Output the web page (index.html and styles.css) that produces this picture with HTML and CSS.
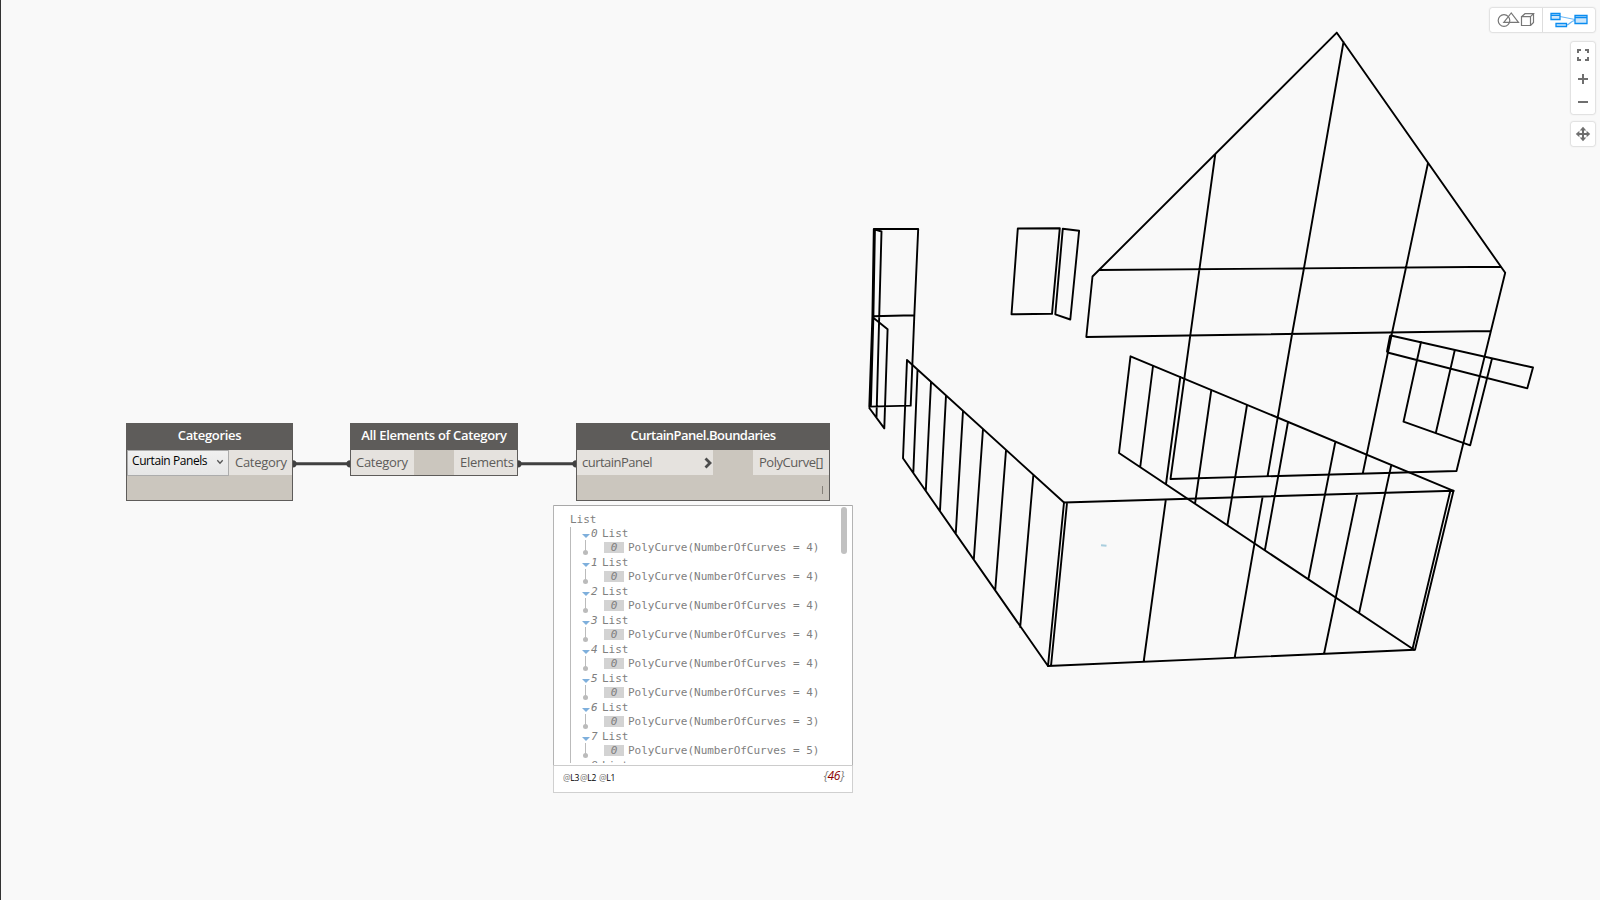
FILE: index.html
```html
<!DOCTYPE html>
<html lang="en">
<head>
<meta charset="utf-8">
<title>Graph workspace</title>
<link rel="stylesheet" href="styles.css">
</head>
<body>
<main class="workspace">
<svg class="scene" width="1600" height="900" viewBox="0 0 1600 900">
<g class="geometry">
<path d="M873.8 229L918.2 229L914.3 316L910.7 405.6L869.3 406.6L872.4 316.3Z M873 316.2L914 315.2 M875.2 229.6L881.5 231.5L876.5 417 M874.9 230L873.4 316L870.9 405 M872.7 317.3L887.6 329.3L884.3 428.4L869.3 408"/>
<path d="M1017.8 228.5L1059.8 228.2L1052 313.8L1011.5 314.3Z M1062.8 228.7L1079.1 230.8L1070.3 319.5L1055.3 314.3Z"/>
<path d="M1336.8 32.7L1092.5 276.5L1086.3 337L1490.5 331 M1336.8 32.7L1505.2 272.8L1456.5 471L1170.5 479 M1099 270L1501 266.7 M1215.3 154L1170.5 479 M1343.5 42L1304 268L1292 334.5L1267.7 475.5 M1428 163L1406 267.5L1392 333L1362.8 473.3"/>
<path d="M1390.8 335.5L1533 367.5L1527.3 388.3L1387.5 352.5Z M1390 336L1387 351.5 M1421 342L1403.5 421.7L1470.2 445.3L1492 358.5 M1454.8 350L1435.8 433"/>
<path d="M1064 502.5L907 360L903 458.3L1048 666Z M917.5 370L913.3 473 M931 382L925.8 491 M946 395.5L940 510.5 M963 411L955.8 533 M983 429L973.8 559.5 M1006 450.5L995.2 590.5 M1033.3 475.5L1020.2 627"/>
<path d="M1064 502.5L1453.5 490.8L1415 649.8L1048 666 M1067 503L1051 666 M1450.3 491L1412.5 649 M1165.7 500.5L1143.7 661.5 M1262.5 497.5L1234.7 657.5 M1357.3 494L1324.2 653"/>
<path d="M1453.5 490.8L1130.5 356.3L1119 453L1414 649.8 M1153 366L1140.3 466.5 M1180.3 377L1166 484 M1211.3 390L1195.2 502.5 M1247 405L1227.5 524.5 M1288 422L1265 549.5 M1335.3 442L1308.5 578.5 M1391.3 465L1359.2 612.5"/>
</g>
<path class="marker" d="M1101 545.2L1106.5 545.8"/>
<g class="wires"><path d="M293 463.8H350 M518 463.8H576"/><circle cx="293" cy="463.8" r="3.6"/><circle cx="350" cy="463.8" r="3.6"/><circle cx="518" cy="463.8" r="3.6"/><circle cx="576" cy="463.8" r="3.6"/></g>
</svg>

<section class="node node-categories">
<h2 class="node-title"><span class="t-categories">Categories</span></h2>
<div class="ports"><div class="select"><span class="t-panels">Curtain Panels</span><svg width="8" height="6" viewBox="0 0 8 6"><path d="M1.3 1.2L4 4.2L6.7 1.2"/></svg></div><div class="port port-cat"><span class="t-category">Category</span></div></div>
</section>
<section class="node node-elements">
<h2 class="node-title"><span class="t-all">All Elements of Category</span></h2>
<div class="ports"><div class="port port-in"><span class="t-category">Category</span></div><div class="port port-out"><span class="t-elements">Elements</span></div></div>
</section>
<section class="node node-boundaries">
<h2 class="node-title"><span class="t-bound">CurtainPanel.Boundaries</span></h2>
<div class="ports"><div class="port port-curtain"><span class="t-curtain">curtainPanel</span><svg width="9" height="12" viewBox="0 0 9 12"><path d="M1.5 1.5L6 6L1.5 10.5"/></svg></div><div class="port port-poly"><span class="t-poly">PolyCurve[]</span></div></div>
<div class="lacing"></div>
</section>

<section class="preview">
<div class="list-view">
<div class="root">List</div>
<div class="tree">
<div class="entry"><div class="head"><i>0</i>List</div><div class="item"><b>0</b>PolyCurve(NumberOfCurves = 4)</div></div>
<div class="entry"><div class="head"><i>1</i>List</div><div class="item"><b>0</b>PolyCurve(NumberOfCurves = 4)</div></div>
<div class="entry"><div class="head"><i>2</i>List</div><div class="item"><b>0</b>PolyCurve(NumberOfCurves = 4)</div></div>
<div class="entry"><div class="head"><i>3</i>List</div><div class="item"><b>0</b>PolyCurve(NumberOfCurves = 4)</div></div>
<div class="entry"><div class="head"><i>4</i>List</div><div class="item"><b>0</b>PolyCurve(NumberOfCurves = 4)</div></div>
<div class="entry"><div class="head"><i>5</i>List</div><div class="item"><b>0</b>PolyCurve(NumberOfCurves = 4)</div></div>
<div class="entry"><div class="head"><i>6</i>List</div><div class="item"><b>0</b>PolyCurve(NumberOfCurves = 3)</div></div>
<div class="entry"><div class="head"><i>7</i>List</div><div class="item"><b>0</b>PolyCurve(NumberOfCurves = 5)</div></div>
<div class="entry last"><div class="head"><i>8</i>List</div></div>
</div>
<div class="scrollbar"></div>
</div>
<div class="levels"><div class="level-tags"><span><em>@</em>L3</span><span><em>@</em>L2</span><span><em>@</em>L1</span></div><div class="count">{<strong>46</strong>}</div></div>
</section>

<nav class="controls">
<div class="views">
<button class="view geometry-view" aria-label="Geometry view"><svg width="38" height="16" viewBox="0 0 38 16"><g fill="none" stroke="#777" stroke-width="1.2"><circle cx="7" cy="8.5" r="5.8"/><path d="M14.2 1L6.8 10.3H21.5Z M24.5 4.7H33.5V13.5H24.5Z M24.5 4.7L28 1.7H36.5L33.5 4.7 M36.5 1.7V10.5L33.5 13.5"/></g></svg></button>
<button class="view graph-view" aria-label="Graph view"><svg width="38" height="16" viewBox="0 0 38 16"><g fill="none" stroke="#6cb8f5" stroke-width="1.2"><path d="M10 4.5L25 7.5 M16 13C20 13 20 9 25 8.3"/></g><g fill="#cce6fb" stroke="#0a8cf0" stroke-width="1.3"><path d="M1 1.5H10V7.5H1Z M6 11.5H16.5V14.5H6Z M25 3.5H37V11.5H25Z"/><path d="M1 3.3H10 M25 5.5H37"/></g></svg></button>
</div>
<div class="zoom">
<svg width="24" height="24" viewBox="0 0 24 24"><path d="M7 11V8H10 M14 8H17V11 M17 15V18H14 M10 18H7V15"/></svg>
<svg width="24" height="24" viewBox="0 0 24 24"><path d="M7 13H17 M12 8V18"/></svg>
<svg width="24" height="24" viewBox="0 0 24 24"><path d="M7 12H17"/></svg>
</div>
<div class="pan"><svg width="24" height="24" viewBox="0 0 24 24"><path d="M6 12H18 M12 6V18"/><path class="tips" d="M12 4.8L15.3 8.4H8.7Z M12 19.2L15.3 15.6H8.7Z M4.8 12L8.4 8.7V15.3Z M19.2 12L15.6 8.7V15.3Z"/></svg></div>
</nav>
</main>
</body>
</html>
```
FILE: styles.css
```css
* { box-sizing: border-box; }
body { margin: 0; background: #f9f9f9; font-family: "Open Sans", sans-serif; }
.workspace { position: relative; width: 1600px; height: 900px; overflow: hidden; border-left: 1px solid #333; }
.scene { position: absolute; left: -1px; top: 0; }
.geometry { fill: none; stroke: #000; stroke-width: 1.9; stroke-linejoin: round; stroke-linecap: round; }
.marker { fill: none; stroke: #a9cede; stroke-width: 2; }
.wires { fill: #414141; stroke: #414141; stroke-width: 3; }
.wires circle { stroke: none; }

.node { position: absolute; top: 423px; background: #cbc6be; border: 1px solid #5e5c5a; }
.node-categories { left: 125px; width: 167px; height: 78px; }
.node-elements { left: 349px; width: 168px; height: 53px; }
.node-boundaries { left: 575px; width: 254px; height: 78px; }
.node-title { margin: 0; height: 26px; background: #5e5c5a; color: #fff; font-size: 13px; font-weight: 600; line-height: 23px; text-align: center; white-space: nowrap; }
.ports { display: flex; justify-content: space-between; height: 25px; font-size: 13px; line-height: 25px; color: #5e5c5a; white-space: nowrap; }
.port { background: #e5e2de; }
.port-cat { width: 63px; padding-left: 6px; }
.port-in { width: 63px; padding-left: 5px; }
.port-out { width: 63px; padding-left: 6px; }
.port-curtain { width: 136px; padding: 0 0 0 5px; display: flex; justify-content: space-between; align-items: center; }
.port-curtain svg { fill: none; stroke: #4c4c4c; stroke-width: 2.8; }
.port-poly { width: 76px; padding-left: 6px; }
.select { width: 102px; height: 26px; padding: 0 4px; display: flex; justify-content: space-between; border: 1px solid #acacac; background: linear-gradient(#f0f0f0, #e6e6e6); color: #000; font-size: 12px; line-height: 19px; }
.select svg { margin-top: 8px; fill: none; stroke: #555; stroke-width: 1.3; }
.lacing { width: 1px; height: 8px; margin: 11px 6px 0 auto; background: #858079; }
.t-categories { letter-spacing: -.3px; }
.t-all { letter-spacing: -.3px; }
.t-bound { letter-spacing: -.52px; }
.t-category, .t-elements { letter-spacing: -.3px; }
.t-poly { letter-spacing: -.46px; }
.t-panels { letter-spacing: -.42px; }
.t-curtain { letter-spacing: -.52px; }

.preview { position: absolute; left: 552px; top: 505px; width: 300px; height: 288px; background: #fff; border: 1px solid #d0d0d0; border-top-color: #a8a8a8; }
.list-view { position: relative; height: 260px; padding: 7px 0 0 17px; overflow: hidden; border-bottom: 1px solid #ccc; box-shadow: inset 1px 0 #b4b4b4, inset -1px 0 #b4b4b4; margin: 0 -1px; color: #808080; font: 11px/14px "DejaVu Sans Mono", monospace; letter-spacing: -.02px; white-space: nowrap; }
.root { height: 14px; }
.tree { height: 236px; overflow: hidden; border-left: 1px solid #bbb; }
.entry { height: 29px; padding-left: 11px; }
.last { height: 14px; }
.head { display: flex; height: 14px; }
.head::before { content: ""; width: 8px; height: 4px; margin: 7px 1px 0 0; background: #7eafdc; clip-path: polygon(0 0, 100% 0, 50% 100%); }
.head i { width: 11px; }
.item { display: flex; height: 15px; padding-left: 22px; position: relative; }
.item::before { content: ""; position: absolute; left: 3px; top: -1px; width: 1px; height: 12px; background: #bbb; }
.item::after { content: ""; position: absolute; left: 1px; top: 9px; width: 5px; height: 5px; border-radius: 50%; background: #bbb; }
.item b { width: 20px; height: 11px; margin: 1px 4px 0 0; background: #d3d3d3; text-align: center; line-height: 12px; font-weight: 400; font-style: italic; }
.scrollbar { position: absolute; right: 6px; top: 1px; width: 6px; height: 47px; border-radius: 3px; background: #c1c1c1; }
.levels { display: flex; justify-content: space-between; height: 26px; padding: 0 8px 0 9px; }
.level-tags { display: flex; padding-top: 5px; font: 8.5px/14px "Open Sans", sans-serif; letter-spacing: -.3px; color: #000; }
.level-tags span { width: 17px; }
.level-tags span + span { width: 19px; }
.level-tags em { font-style: normal; color: #777; }
.count { font-size: 12px; line-height: 20px; font-style: italic; color: #808080; letter-spacing: -.3px; }
.count strong { font-weight: 400; color: #8b0000; }

.controls { position: absolute; right: 5px; top: 8px; display: flex; flex-direction: column; align-items: flex-end; }
.views, .zoom, .pan { background: #fff; border-radius: 2px; box-shadow: 0 0 2px rgba(0,0,0,.35); }
.views { display: flex; width: 105px; height: 24px; }
.view { width: 52px; padding: 0; border: 0; background: none; display: flex; justify-content: center; align-items: center; }
.graph-view { width: 53px; border-left: 1px solid #ddd; }
.zoom { display: flex; flex-direction: column; width: 24px; height: 72px; margin-top: 10px; }
.pan { width: 24px; height: 24px; margin-top: 8px; }
.zoom svg, .pan svg { display: block; fill: none; stroke: #6f6f6f; stroke-width: 2; }
.pan .tips { fill: #6f6f6f; stroke: none; }
```
